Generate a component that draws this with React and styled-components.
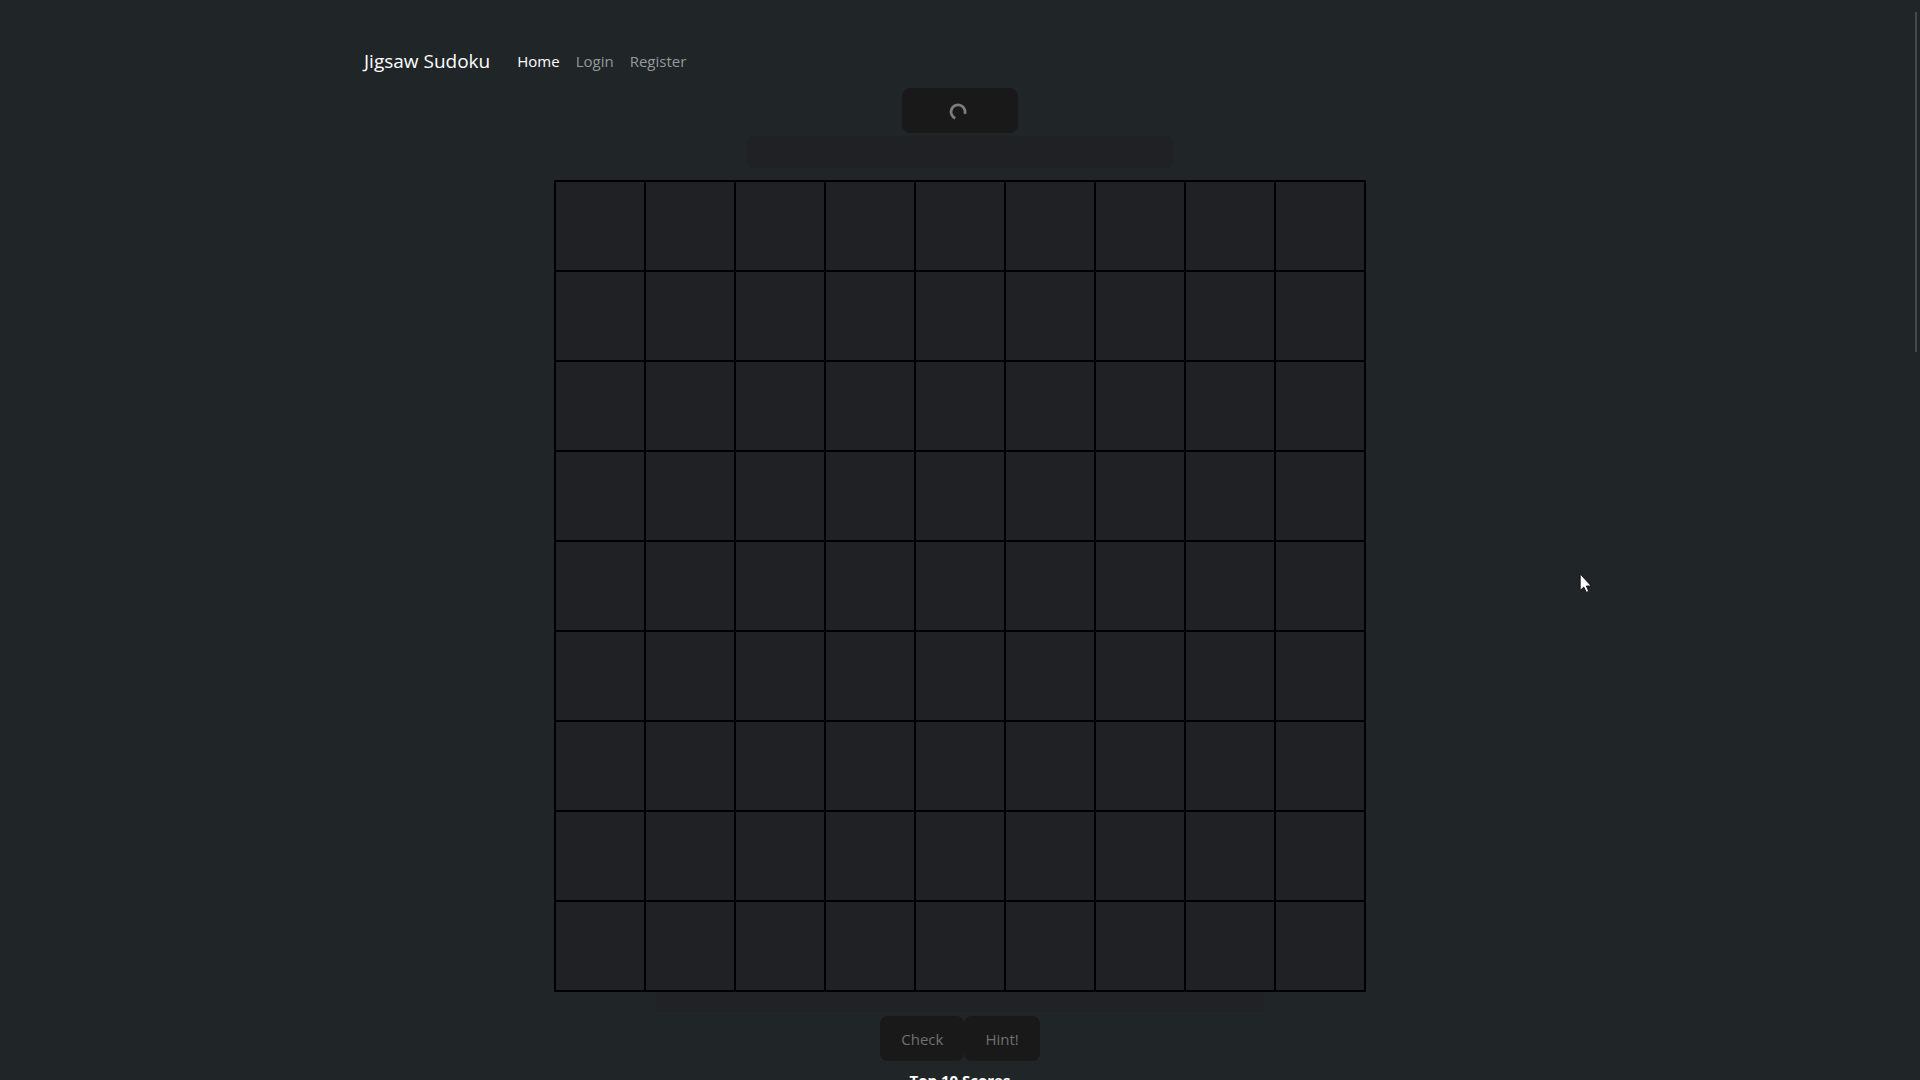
import React from 'react';
import styled, { createGlobalStyle } from 'styled-components';

const GlobalStyle = createGlobalStyle`
  * { box-sizing: border-box; }
  body {
    margin: 0;
    background: #202528;
    color: #fff;
    font: 16px/24px "Segoe UI", "Open Sans", "Noto Sans", sans-serif;
  }
`;

const Page = styled.div`
  height: 100vh;
  overflow: hidden;
`;

const Shell = styled.div`
  max-width: 1280px;
  margin: 0 auto;
  padding: 32px;
`;

const Navbar = styled.nav`
  display: flex;
  align-items: center;
  height: 56px;
  padding: 2px 12px 0;
`;

const Brand = styled.a`
  margin-right: 19px;
  color: #fff;
  font-size: 19px;
  line-height: 30px;
  text-decoration: none;
`;

const NavLink = styled.a`
  padding: 8px;
  color: ${({ $active }) => ($active ? '#fff' : '#96989a')};
  font-size: 15px;
  text-decoration: none;
`;

const Game = styled.main`
  display: flex;
  flex-direction: column;
  align-items: center;
`;

const GameButton = styled.button`
  display: flex;
  align-items: center;
  justify-content: center;
  min-width: ${({ $wide }) => ($wide ? '116px' : '0')};
  height: 45px;
  padding: 0 21px;
  border: 0;
  border-radius: 8px;
  background: #191919;
  color: #707070;
  font: inherit;
  font-size: 15px;
`;

const Spinner = styled.svg`
  width: 18px;
  height: 18px;
  margin: 2px 4px 0 0;
`;

const StatusBar = styled.div`
  width: 426px;
  max-width: 100%;
  height: 32px;
  margin: 3px 0 12px;
  border-radius: 8px;
  background: #202124;
`;

const Board = styled.table`
  border-collapse: collapse;
`;

const Cell = styled.td`
  width: 90px;
  height: 90px;
  padding: 0;
  border: 2px solid #000;
  background: #202124;
`;

const Message = styled.div`
  width: 608px;
  max-width: 100%;
  height: 20px;
  margin-bottom: 4px;
  background: #202226;
`;

const Actions = styled.div`
  display: flex;
`;

const ScoresTitle = styled.h2`
  margin: 7px 0 0;
  font-size: 15px;
  line-height: 24px;
`;

const ScrollThumb = styled.div`
  position: fixed;
  top: 12px;
  right: 3px;
  width: 2px;
  height: 340px;
  background: #46494c;
`;

const Pointer = styled.svg`
  position: fixed;
  left: 1579px;
  top: 573px;
  width: 13px;
  height: 20px;
`;

const SIZE = Array.from({ length: 9 }, (_, i) => i);

export default function App() {
  return (
    <Page>
      <GlobalStyle />
      <Shell>
        <Navbar>
          <Brand href="#">Jigsaw Sudoku</Brand>
          <NavLink href="#" $active>Home</NavLink>
          <NavLink href="#">Login</NavLink>
          <NavLink href="#">Register</NavLink>
        </Navbar>
        <Game>
          <GameButton $wide disabled aria-label="Loading">
            <Spinner viewBox="0 0 18 18" fill="none" stroke="#7c7c7c" strokeWidth="2.8">
              <path d="M6.2 15.3A7 7 0 1 1 15.8 10.8" />
            </Spinner>
          </GameButton>
          <StatusBar />
          <Board>
            <tbody>
              {SIZE.map((row) => (
                <tr key={row}>
                  {SIZE.map((col) => (
                    <Cell key={col} />
                  ))}
                </tr>
              ))}
            </tbody>
          </Board>
          <Message />
          <Actions>
            <GameButton disabled>Check</GameButton>
            <GameButton disabled>Hint!</GameButton>
          </Actions>
          <ScoresTitle>Top 10 Scores</ScoresTitle>
        </Game>
      </Shell>
      <ScrollThumb />
      <Pointer viewBox="0 0 12 19">
        <path d="M1 1V16.5L4.4 13.3L6.8 18.3L9 17.3L6.7 12.3H11.3Z" fill="#fff" stroke="#000" strokeWidth="0.7" />
      </Pointer>
    </Page>
  );
}
